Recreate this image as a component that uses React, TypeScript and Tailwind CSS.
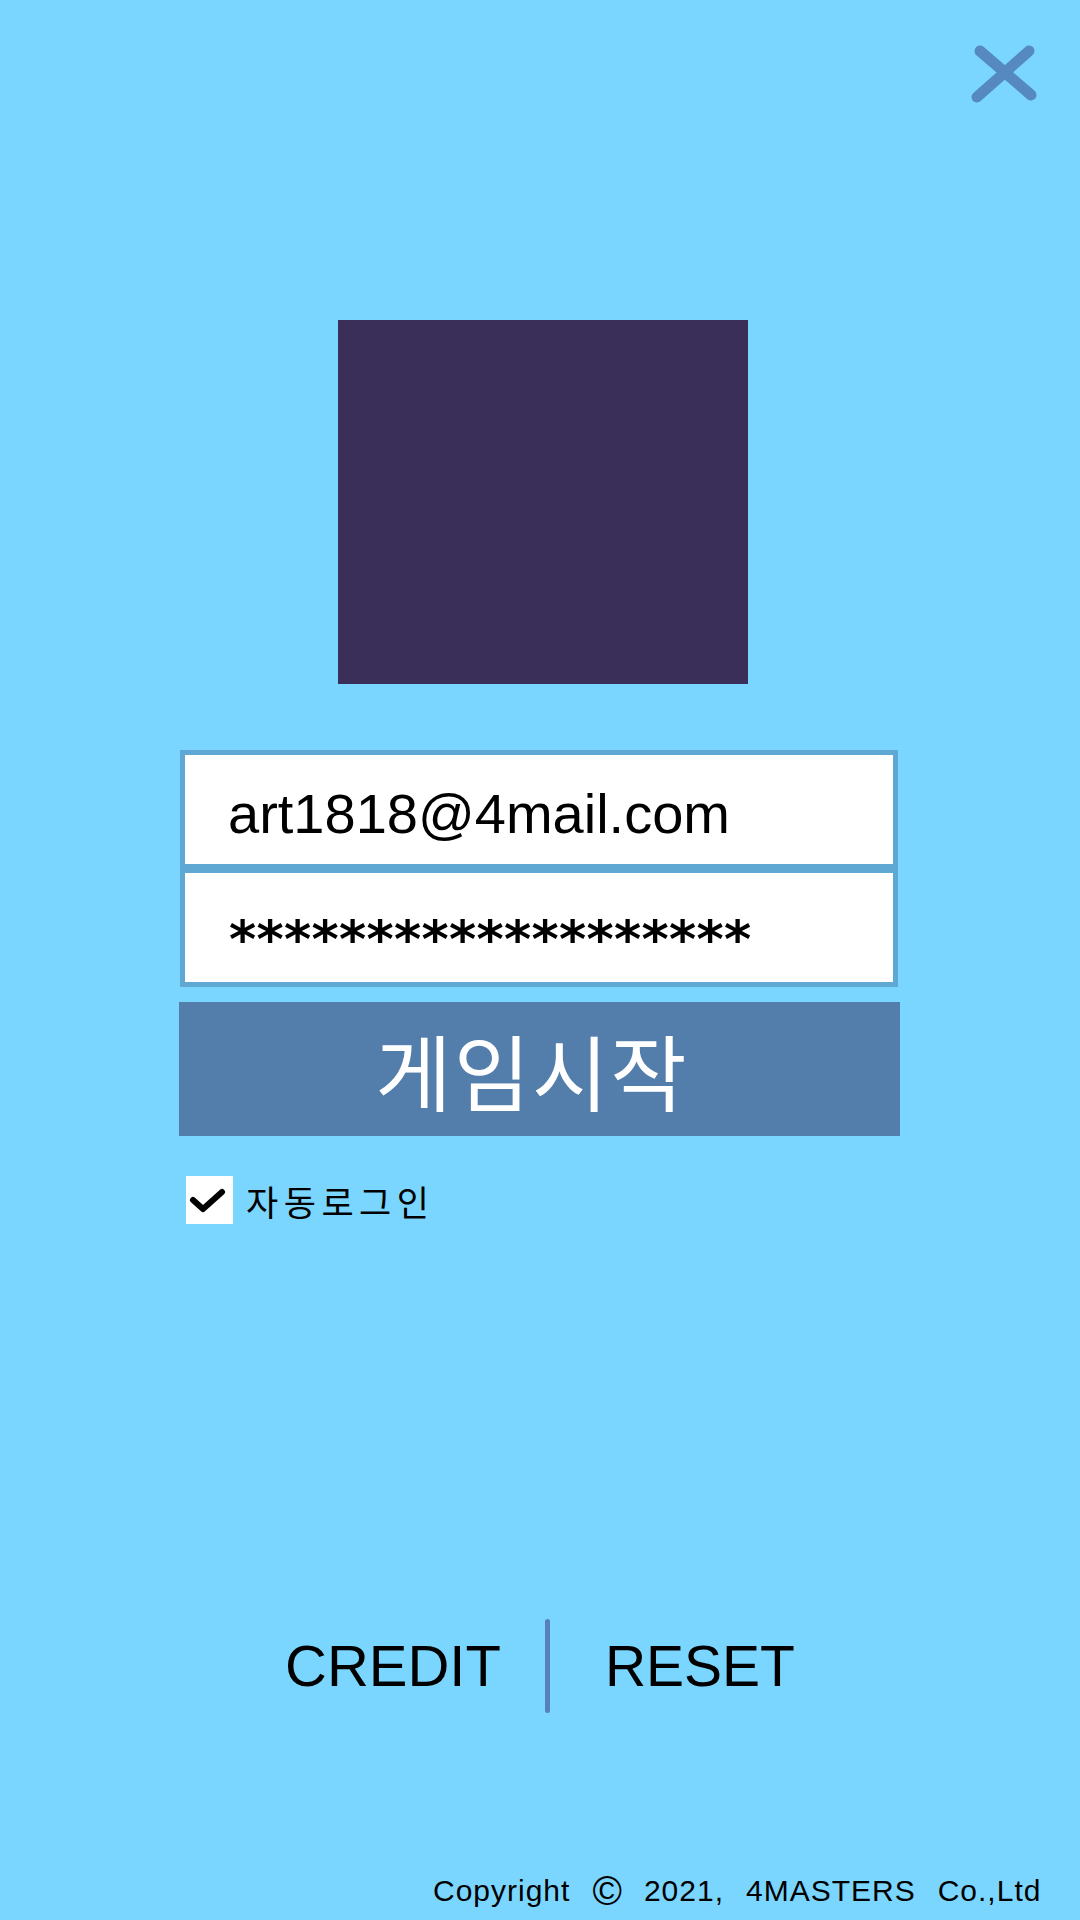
import React from "react";

export default function App() {
  return (
    <div className="relative w-[1080px] h-[1920px] bg-[#7ad6ff] overflow-hidden flex flex-col" style={{ fontFamily: '"Liberation Sans", Arial, sans-serif' }}>
      <button className="absolute left-[968px] top-[43px] w-[72px] h-[62px]" aria-label="close">
        <svg width="72" height="62" viewBox="0 0 72 62">
          <line x1="12" y1="8" x2="63" y2="52" stroke="#5589c0" strokeWidth="11" strokeLinecap="round" />
          <line x1="61" y1="8" x2="9" y2="54" stroke="#5589c0" strokeWidth="11" strokeLinecap="round" />
        </svg>
      </button>

      <div className="mt-[320px] ml-[338px] w-[410px] h-[364px] bg-[#3a2f58]" />

      <div className="mt-[66px] ml-[180px] w-[718px] border-[5px] border-[#60a8d4] bg-[#60a8d4] flex flex-col gap-[9px]">
        <div className="h-[109px] bg-white pl-[43px] pt-[31px]">
          <div className="text-[56px] leading-none text-black">art1818@4mail.com</div>
        </div>
        <div className="h-[109px] bg-white pl-[44px] pt-[40px]">
          <div className="text-[52px] leading-none text-black font-bold tracking-[0.3px]" style={{ fontFamily: '"DejaVu Sans", sans-serif' }}>*******************</div>
        </div>
      </div>

      <button className="mt-[15px] ml-[179px] w-[721px] h-[134px] bg-[#537dab] flex items-center justify-center pr-[15px]">
        <span className="text-white text-[83px] leading-none tracking-[2px]" style={{ fontFamily: '"Noto Sans CJK KR", sans-serif' }}>게임시작</span>
      </button>

      <div className="mt-[40px] ml-[186px] flex items-center gap-[13px]">
        <div className="w-[47px] h-[48px] bg-white flex items-center justify-center">
          <svg width="47" height="48" viewBox="0 0 47 48">
            <polyline points="7,24 17,33 36,16" fill="none" stroke="#000" strokeWidth="6" strokeLinecap="round" strokeLinejoin="round" />
          </svg>
        </div>
        <span className="text-black text-[35px] leading-none tracking-[5.5px]" style={{ fontFamily: '"Noto Sans CJK KR", sans-serif' }}>자동로그인</span>
      </div>

      <div className="mt-[395px] ml-[285px] flex items-center h-[94px]">
        <span className="text-[58px] leading-none text-black">CREDIT</span>
        <div className="ml-[44px] w-[5px] h-[94px] rounded-full bg-[#5582b8]" />
        <span className="ml-[55px] text-[57px] leading-none text-black">RESET</span>
      </div>

      <div className="mt-[158px] ml-[433px] flex items-center gap-[22px] text-[30px] leading-none text-black tracking-[1px]">
        <span>Copyright</span>
        <span className="text-[40px] leading-none tracking-normal">©</span>
        <span>2021,</span>
        <span>4MASTERS</span>
        <span>Co.,Ltd</span>
      </div>
    </div>
  );
}
